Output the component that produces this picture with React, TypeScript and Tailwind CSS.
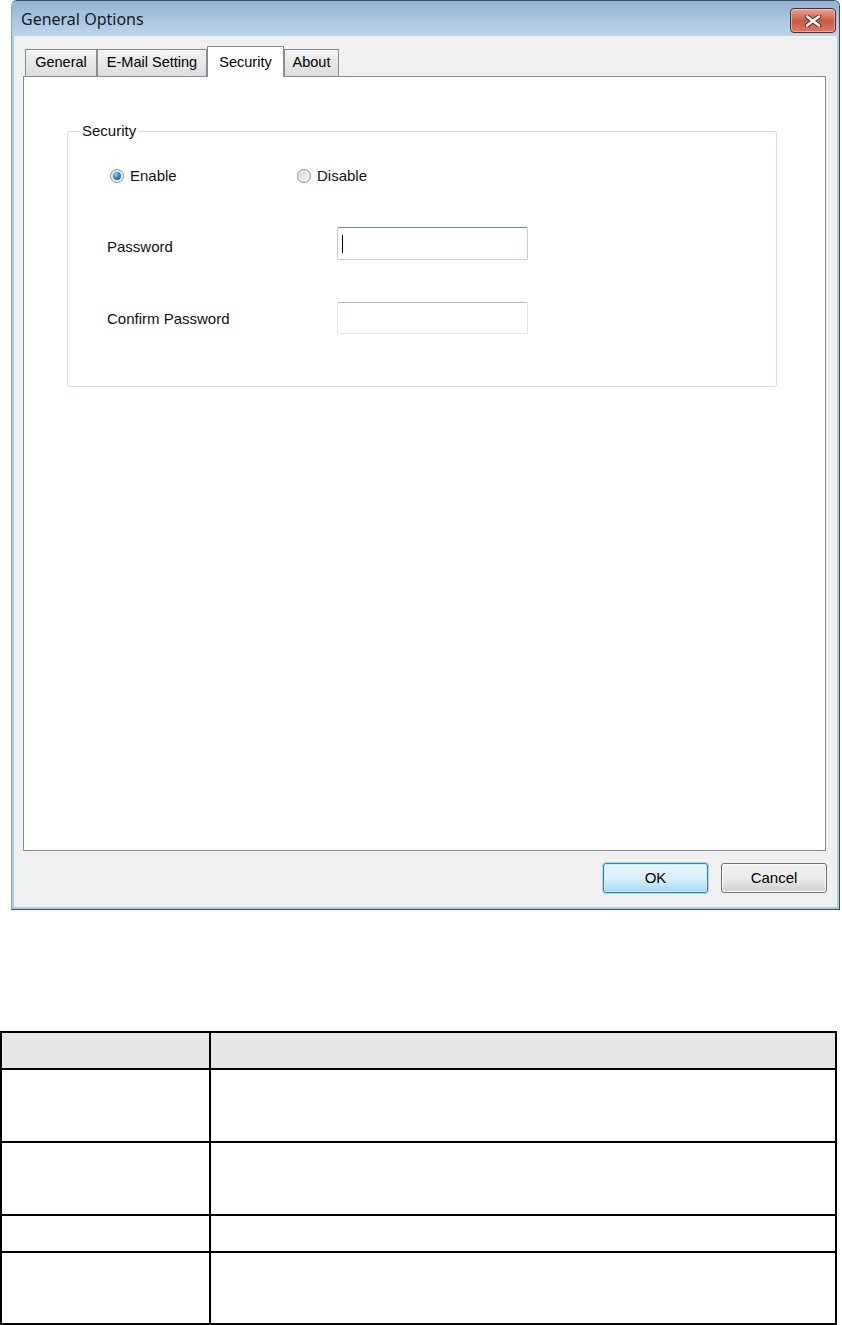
import React from 'react'

const sans = { fontFamily: '"Liberation Sans", Arial, sans-serif' }

const Radio = ({ checked, label }: { checked?: boolean; label: string }) => (
  <div className="flex items-center gap-[6px]">
    <span className="flex h-[14px] w-[14px] items-center justify-center rounded-full border border-[#8f8f8f] bg-gradient-to-br from-[#d2d2d2] to-[#fbfbfb] shadow-[inset_0_0_0_1px_#f4f4f4]">
      {checked && (
        <span className="h-[8px] w-[8px] rounded-full bg-[radial-gradient(circle_at_35%_30%,#8fd3ff_0%,#2a86c8_45%,#0f4f80_100%)]" />
      )}
    </span>
    <span className="text-[15px] text-[#111]">{label}</span>
  </div>
)

const Tab = ({ label, width, active }: { label: string; width: string; active?: boolean }) =>
  active ? (
    <div
      className={`${width} relative z-10 -mb-px flex h-[31px] justify-center border border-b-0 border-[#898c95] bg-white pt-[5px] text-[14.5px] text-black`}
    >
      {label}
    </div>
  ) : (
    <div
      className={`${width} flex h-[27px] items-center justify-center border border-b-0 border-[#898c95] bg-gradient-to-b from-[#f3f3f3] to-[#dcdcdc] text-[14.5px] text-black`}
    >
      {label}
    </div>
  )

const rows = [
  { h: 'h-[35px]', head: true },
  { h: 'h-[71px]' },
  { h: 'h-[71px]' },
  { h: 'h-[35px]' },
  { h: 'h-[70px]' },
]

export default function App() {
  return (
    <div className="h-[1325px] w-[842px] overflow-hidden bg-white" style={sans}>
      {/* Dialog window */}
      <div className="ml-[11px] flex h-[910px] w-[829px] flex-col rounded-t-[6px] border border-[#3b4b5c] border-l-[#8aa4bf]">
        {/* Title bar */}
        <div className="flex h-[35px] items-start justify-between rounded-t-[5px] bg-gradient-to-b from-[#95b3d4] to-[#bed5ec] pl-[9px] pr-[3px]">
          <span
            className="mt-[8px] text-[16px] leading-[20px] text-[#1a1a1a]"
            style={{ fontFamily: '"Noto Sans", "Open Sans", sans-serif' }}
          >
            General Options
          </span>
          <button className="mt-[7px] flex h-[25px] w-[46px] items-center justify-center rounded-[4px] border border-[#5b2b28] bg-gradient-to-b from-[#e9a898] via-[#c95a45] to-[#d77a66] shadow-[inset_0_0_0_1px_rgba(255,220,210,0.5)]">
            <svg width="18" height="12" viewBox="0 0 18 12">
              <path d="M3 1.5 L15 10.5 M15 1.5 L3 10.5" stroke="#5a2a22" strokeWidth="4.4" strokeLinecap="round" />
              <path d="M3 1.5 L15 10.5 M15 1.5 L3 10.5" stroke="#ffffff" strokeWidth="2.6" strokeLinecap="round" />
            </svg>
          </button>
        </div>

        {/* Body */}
        <div className="flex flex-1 flex-col border-x-2 border-b-2 border-[#a9cdea] bg-[#f0f0f0] pl-[9px] pr-[11px] pt-[10px]">
          {/* Tabs */}
          <div className="flex items-end pl-[2px]">
            <Tab label="General" width="w-[72px]" />
            <Tab label="E-Mail Setting" width="w-[110px]" />
            <Tab label="Security" width="w-[77px]" active />
            <Tab label="About" width="w-[55px]" />
          </div>

          {/* Tab panel */}
          <div className="h-[775px] border border-[#898c95] bg-white">
            <div className="relative ml-[43px] mt-[54px] h-[256px] w-[710px] rounded-[3px] border border-[#d5dfe5]">
              <span className="absolute -top-[10px] left-[12px] bg-white px-[2px] text-[15px] leading-[18px] text-[#111]">
                Security
              </span>

              <div className="mt-[36px] flex h-[16px] items-center">
                <div className="ml-[42px] w-[187px]">
                  <Radio checked label="Enable" />
                </div>
                <Radio label="Disable" />
              </div>

              <div className="mt-[43px] flex items-center">
                <span className="mt-[8px] w-[269px] pl-[39px] text-[15px] text-[#111]">Password</span>
                <div className="flex h-[33px] w-[191px] items-center rounded-[2px] border border-[#b7d2ea] border-t-[#5d93bf] pl-[4px]">
                  <span className="h-[18px] w-px bg-black" />
                </div>
              </div>

              <div className="mt-[42px] flex items-center">
                <span className="mt-[3px] w-[269px] pl-[39px] text-[15px] text-[#111]">Confirm Password</span>
                <div className="h-[32px] w-[191px] rounded-[2px] border border-[#e1e6eb] border-t-[#b3b6bc]" />
              </div>
            </div>
          </div>

          {/* Buttons */}
          <div className="mt-[12px] flex justify-end gap-[13px]">
            <button className="h-[30px] w-[105px] rounded-[3px] border border-[#3c7fb1] bg-gradient-to-b from-[#eaf6fd] via-[#d9f0fc] to-[#a7d9f5] text-[15px] text-black shadow-[0_0_0_1px_#9fdcf8,inset_0_0_0_1px_#c7ecfc]">
              OK
            </button>
            <button className="-mr-px h-[30px] w-[106px] rounded-[3px] border border-[#707070] bg-gradient-to-b from-[#f2f2f2] via-[#ebebeb] to-[#cfcfcf] text-[15px] text-black shadow-[inset_0_0_0_1px_#fcfcfc]">
              Cancel
            </button>
          </div>
        </div>
      </div>

      {/* Empty table */}
      <div className="mt-[121px] grid w-[837px] grid-cols-[207px_1fr] gap-[2px] bg-black p-[2px]">
        {rows.map((r, i) => (
          <React.Fragment key={i}>
            <div className={`${r.h} ${r.head ? 'bg-[#e6e6e6]' : 'bg-white'}`} />
            <div className={`${r.h} ${r.head ? 'bg-[#e6e6e6]' : 'bg-white'}`} />
          </React.Fragment>
        ))}
      </div>
    </div>
  )
}
